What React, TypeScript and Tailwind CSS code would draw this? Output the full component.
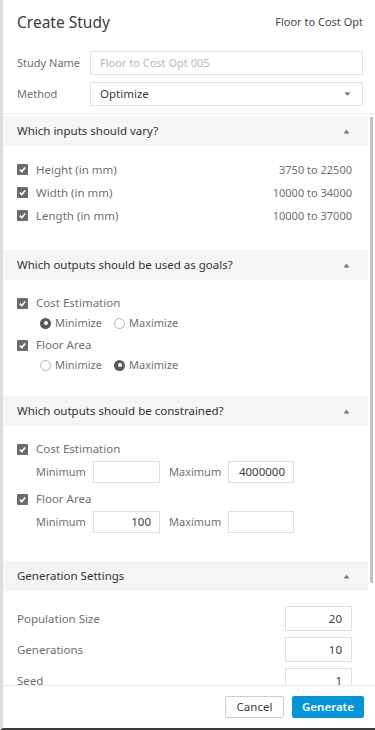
import React from 'react'

const font = { fontFamily: '"Noto Sans", "Open Sans", sans-serif' }

const Check = () => (
  <span className="flex h-[11px] w-[11px] shrink-0 items-center justify-center rounded-[1px] bg-[#6b6b6b]">
    <svg width="9" height="9" viewBox="0 0 10 10">
      <path d="M2 5.2 L4.2 7.3 L8 2.8" fill="none" stroke="#fff" strokeWidth="1.8" />
    </svg>
  </span>
)

const Radio = ({ on }: { on?: boolean }) =>
  on ? (
    <span className="flex h-[11px] w-[11px] shrink-0 items-center justify-center rounded-full bg-[#5a5a5a]">
      <span className="h-[4px] w-[4px] rounded-full bg-white" />
    </span>
  ) : (
    <span className="h-[11px] w-[11px] shrink-0 rounded-full border border-[#b5b5b5] bg-white" />
  )

const Caret = () => (
  <svg width="7" height="5" viewBox="0 0 7 5" className="mr-[2px]">
    <path d="M0.5 4.5 L3.5 0.8 L6.5 4.5 Z" fill="#777" />
  </svg>
)

const SectionHead = ({ title }: { title: string }) => (
  <div className="flex h-[30px] items-center justify-between bg-[#f5f5f5] pl-[14px] pr-[16px] text-[11.5px] text-[#333]">
    <span>{title}</span>
    <Caret />
  </div>
)

const Box = ({ value, w }: { value?: string; w: string }) => (
  <div className={`flex h-[22px] items-center justify-end border border-[#dedede] bg-white pr-[8px] text-[11.5px] text-[#3c3c3c] ${w}`}>
    {value}
  </div>
)

const RangeRow = ({ label, range }: { label: string; range: string }) => (
  <div className="flex h-[23px] items-center">
    <Check />
    <span className="ml-[8px] flex-1 text-[#707070]">{label}</span>
    <span className="text-[11px] text-[#707070]">{range}</span>
  </div>
)

const Goal = ({ label, max }: { label: string; max?: boolean }) => (
  <div>
    <div className="flex h-[20px] items-center">
      <Check />
      <span className="ml-[8px] text-[#707070]">{label}</span>
    </div>
    <div className="flex h-[20px] items-center pl-[23px] text-[11px] text-[#707070]">
      <Radio on={!max} />
      <span className="ml-[4px] w-[59px]">Minimize</span>
      <Radio on={max} />
      <span className="ml-[4px]">Maximize</span>
    </div>
  </div>
)

const Constraint = ({ label, min, max }: { label: string; min?: string; max?: string }) => (
  <div>
    <div className="flex h-[20px] items-center">
      <Check />
      <span className="ml-[8px] text-[#707070]">{label}</span>
    </div>
    <div className="mt-[2px] flex items-center text-[11px] text-[#707070]">
      <span className="ml-[19px] w-[57px]">Minimum</span>
      <Box value={min} w="w-[67px]" />
      <span className="ml-[9px] w-[59px]">Maximum</span>
      <Box value={max} w="w-[66px]" />
    </div>
  </div>
)

const GenRow = ({ label, value }: { label: string; value: string }) => (
  <div className="flex items-center justify-between">
    <span className="text-[#707070]">{label}</span>
    <div className="flex h-[25px] w-[67px] items-center justify-end border border-[#dedede] pr-[9px] text-[#3c3c3c]">
      {value}
    </div>
  </div>
)

export default function App() {
  return (
    <div
      style={font}
      className="flex h-[730px] w-[375px] flex-col overflow-hidden border-b-2 border-l-[3px] border-b-[#3a3a3a] border-l-[#dcdcdc] bg-white text-[11.5px] leading-[16px]"
    >
      <div className="h-[114px] shrink-0 border-b border-[#ececec] pl-[14px] pr-[12px]">
        <div className="flex h-[42px] items-center justify-between pt-[1px]">
          <span className="text-[15.5px] leading-[20px] text-[#3c3c3c]">Create Study</span>
          <span className="text-[11px] text-[#4a4a4a]">Floor to Cost Opt</span>
        </div>
        <div className="mt-[9px] flex items-center">
          <span className="w-[73px] text-[11px] text-[#707070]">Study Name</span>
          <div className="flex h-[24px] flex-1 items-center border border-[#e2e2e2] pl-[9px] text-[11px] text-[#b9b9b9]">
            Floor to Cost Opt 005
          </div>
        </div>
        <div className="mt-[7px] flex items-center">
          <span className="w-[73px] text-[11px] text-[#707070]">Method</span>
          <div className="flex h-[24px] flex-1 items-center justify-between border border-[#e2e2e2] pl-[9px] pr-[11px] text-[#3c3c3c]">
            <span>Optimize</span>
            <svg width="7" height="4" viewBox="0 0 7 4">
              <path d="M0.5 0.5 L3.5 3.7 L6.5 0.5 Z" fill="#777" />
            </svg>
          </div>
        </div>
      </div>

      <div className="flex min-h-0 flex-1 pt-[2px]">
        <div className="flex-1 overflow-hidden">
          <SectionHead title="Which inputs should vary?" />
          <div className="pb-[23px] pl-[14px] pr-[16px] pt-[12px]">
            <RangeRow label="Height (in mm)" range="3750 to 22500" />
            <RangeRow label="Width (in mm)" range="10000 to 34000" />
            <RangeRow label="Length (in mm)" range="10000 to 37000" />
          </div>

          <SectionHead title="Which outputs should be used as goals?" />
          <div className="pb-[21px] pl-[14px] pr-[16px] pt-[13px]">
            <Goal label="Cost Estimation" />
            <div className="h-[2px]" />
            <Goal label="Floor Area" max />
          </div>

          <SectionHead title="Which outputs should be constrained?" />
          <div className="pb-[28px] pl-[14px] pr-[16px] pt-[13px]">
            <Constraint label="Cost Estimation" max="4000000" />
            <div className="h-[6px]" />
            <Constraint label="Floor Area" min="100" />
          </div>

          <SectionHead title="Generation Settings" />
          <div className="flex flex-col gap-[6px] pl-[14px] pr-[16px] pt-[15px]">
            <GenRow label="Population Size" value="20" />
            <GenRow label="Generations" value="10" />
            <GenRow label="Seed" value="1" />
          </div>
        </div>
        <div className="w-[7px] shrink-0">
          <div className="ml-[2px] mt-[1px] h-[466px] w-[3px] bg-[#c2c2c2]" />
        </div>
      </div>

      <div className="flex h-[43px] shrink-0 items-center justify-end gap-[8px] border-t border-[#e8e8e8] pr-[11px]">
        <button className="h-[22px] w-[59px] rounded-[2px] border border-[#cfcfcf] bg-white text-[11.5px] text-[#3c3c3c]">
          Cancel
        </button>
        <button className="h-[22px] w-[72px] rounded-[2px] bg-[#0696d7] text-[11.5px] font-semibold text-white">
          Generate
        </button>
      </div>
    </div>
  )
}
